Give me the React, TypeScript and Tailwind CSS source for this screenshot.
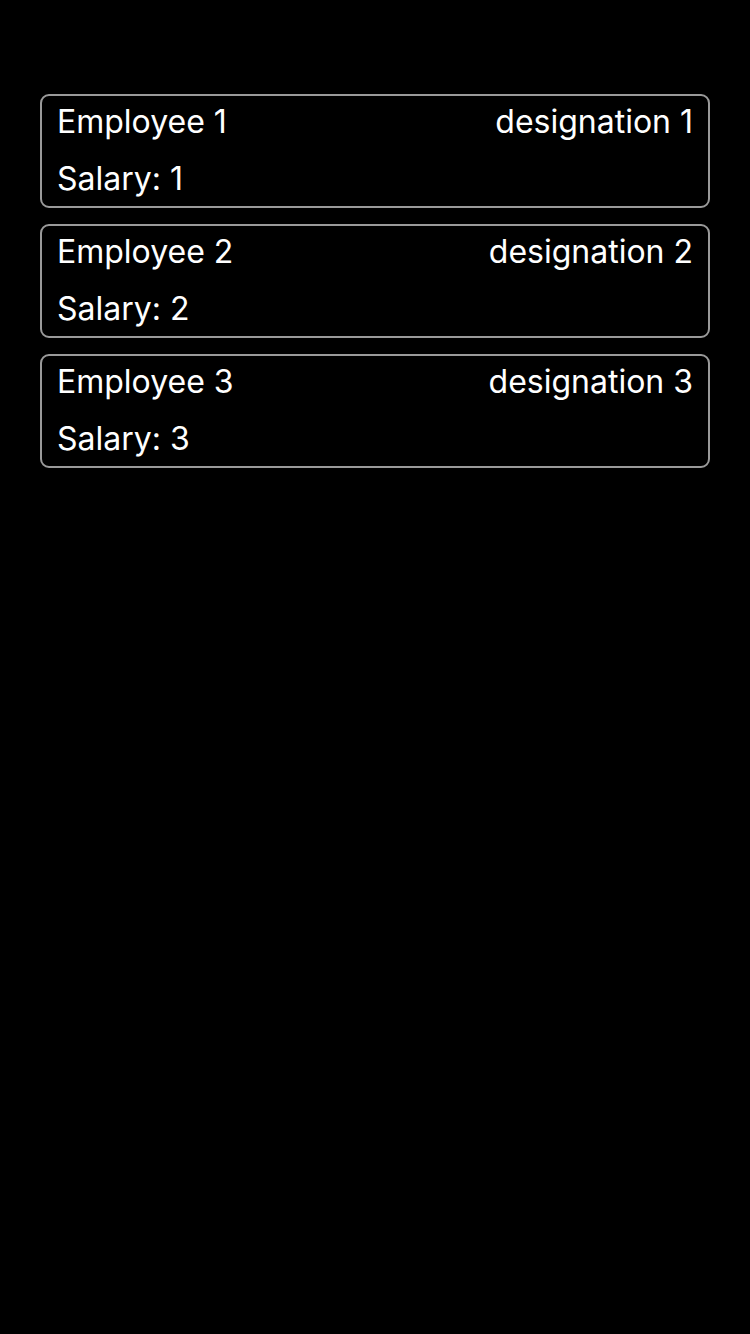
const employees = [1, 2, 3].map((n) => ({
  name: `Employee ${n}`,
  designation: `designation ${n}`,
  salary: n,
}));

export default function App() {
  return (
    <div
      className="min-h-[1334px] w-full bg-black pt-[94px] px-[40px] text-white"
      style={{ fontFamily: "Inter, 'Liberation Sans', sans-serif" }}
    >
      <div className="flex flex-col gap-[16px]">
        {employees.map((e) => (
          <div
            key={e.name}
            className="h-[114px] rounded-[9px] border-2 border-[#9a9a9a] px-[15px] pt-[7px] text-[32px] leading-[38px]"
          >
            <div className="flex justify-between">
              <span>{e.name}</span>
              <span>{e.designation}</span>
            </div>
            <div className="mt-[19px]">Salary: {e.salary}</div>
          </div>
        ))}
      </div>
    </div>
  );
}
